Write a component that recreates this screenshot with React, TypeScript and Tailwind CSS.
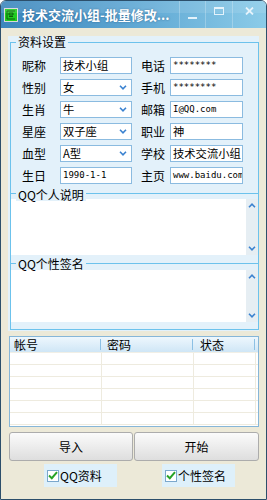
import React from "react";

const FONT = { fontFamily: '"Noto Sans CJK SC", "Liberation Sans", sans-serif' };
const MONO = { fontFamily: '"DejaVu Sans Mono", "Liberation Mono", monospace' };

function Chevron({ up = false }: { up?: boolean }) {
  return (
    <svg width="8" height="5" viewBox="0 0 8 5" className="block">
      <path
        d={up ? "M1 4.2 L4 1.2 L7 4.2" : "M1 0.8 L4 3.8 L7 0.8"}
        fill="none"
        stroke="#3b82d0"
        strokeWidth="1.6"
      />
    </svg>
  );
}

function Field({
  value,
  width,
  select = false,
  mono = false,
}: {
  value: string;
  width: string;
  select?: boolean;
  mono?: boolean;
}) {
  return (
    <div
      className={`${width} h-[17px] bg-white border border-[#8bbbe0] flex items-center pl-[2px] pr-[4px] overflow-hidden`}
    >
      <span
        className={mono ? "text-[9px] leading-none text-black flex-1 whitespace-nowrap" : "text-[11.3px] leading-none text-black flex-1 whitespace-nowrap"}
        style={mono ? MONO : undefined}
      >
        {value}
      </span>
      {select && <Chevron />}
    </div>
  );
}

type Row = {
  l: string;
  lv: string;
  sel?: boolean;
  lmono?: boolean;
  r: string;
  rv: string;
  rmono?: boolean;
};

const rows: Row[] = [
  { l: "昵称", lv: "技术小组", r: "电话", rv: "********", rmono: true },
  { l: "性别", lv: "女", sel: true, r: "手机", rv: "********", rmono: true },
  { l: "生肖", lv: "牛", sel: true, r: "邮箱", rv: "I@QQ.com", rmono: true },
  { l: "星座", lv: "双子座", sel: true, r: "职业", rv: "神" },
  { l: "血型", lv: "A型", sel: true, r: "学校", rv: "技术交流小组" },
  { l: "生日", lv: "1990-1-1", lmono: true, r: "主页", rv: "www.baidu.com", rmono: true },
];

function GroupLabel({ text, top }: { text: string; top: string }) {
  return (
    <div className={`absolute left-[5px] ${top} px-[2px] bg-[#e3f1fa] text-[12px] leading-[12px] text-black`}>
      {text}
    </div>
  );
}

function MemoBox({ h }: { h: string }) {
  return (
    <div className={`flex ${h} bg-white`}>
      <div className="flex-1" />
      <div className="w-[12px] bg-[#e6eef3] flex flex-col items-center justify-between py-[4px]">
        <Chevron up />
        <Chevron />
      </div>
    </div>
  );
}

function CheckItem({ label }: { label: string }) {
  return (
    <div className="w-[73px] h-[23px] bg-[#def0fa] flex items-center pl-[3px] gap-[1px]">
      <div className="w-[12px] h-[12px] bg-white border border-[#7ba8cc] flex items-center justify-center">
        <svg width="10" height="9" viewBox="0 0 10 9">
          <path d="M1 4.5 L3.8 7.2 L9 1.2" fill="none" stroke="#27a327" strokeWidth="2" />
        </svg>
      </div>
      <span className="text-[12px] leading-none text-black">{label}</span>
    </div>
  );
}

export default function App() {
  return (
    <div className="w-[267px] h-[500px] overflow-hidden bg-white" style={FONT}>
      <div className="w-[267px] h-[500px] flex flex-col rounded-t-[6px] overflow-hidden border border-[#2c4f6b]">
        {/* Title bar */}
        <div className="h-[27px] flex items-center bg-gradient-to-r from-[#3b86bc] via-[#5ea7d3] to-[#8bcbe8] relative">
          <div className="absolute inset-x-0 top-0 h-[12px] bg-white/10" />
          <div className="ml-[3px] w-[14px] h-[14px] border border-[#d8d8d8] bg-[#1fcc1f] flex items-center justify-center">
            <svg width="10" height="10" viewBox="0 0 10 10">
              <path d="M1 1 H9 M1 1 V9 H9 M3 3 H7 V5 H3 Z M3 6.5 H7" fill="none" stroke="#0c5c0c" strokeWidth="1" />
            </svg>
          </div>
          <span className="ml-[4px] text-[13px] font-bold text-white leading-none whitespace-nowrap [text-shadow:0_0_2px_rgba(0,40,80,0.5)]">
            技术交流小组-批量修改...
          </span>
          <div className="ml-auto flex h-full">
            <div className="w-[26px] border-l border-white/25 flex items-end justify-center pb-[9px]">
              <div className="w-[9px] h-[2px] bg-[#e3f2fb]" />
            </div>
            <div className="w-[27px] border-l border-white/25 flex items-start justify-center pt-[6px]">
              <div className="w-[10px] h-[8px] border border-[#e3f2fb] border-t-2" />
            </div>
            <div className="w-[34px] border-l border-white/25 flex items-start justify-center pt-[6px]">
              <svg width="9" height="8" viewBox="0 0 9 8">
                <path d="M1 0.5 L8 7.5 M8 0.5 L1 7.5" stroke="#e3f2fb" strokeWidth="1.8" />
              </svg>
            </div>
          </div>
        </div>

        {/* Body */}
        <div className="flex-1 bg-[#ece9d8] pl-[7px] pr-[7px] pt-[8px] flex flex-col">
          {/* Blue panel */}
          <div className="w-[251px] h-[295px] bg-[#e3f1fa] pl-[2px] pt-[6px]">
            {/* 资料设置 */}
            <div className="relative h-[151px] border-x border-t border-[#6cc2ec] pl-[11px] pt-[14px]">
              <GroupLabel text="资料设置" top="top-[-7px]" />
              <div className="flex flex-col gap-[5px]">
                {rows.map((r) => (
                  <div key={r.l} className="flex items-center h-[17px]">
                    <span className="w-[38px] text-[12px] leading-none text-black">{r.l}</span>
                    <Field value={r.lv} width="w-[72px]" select={r.sel} mono={r.lmono} />
                    <span className="ml-[9px] w-[29px] text-[12px] leading-none text-black">{r.r}</span>
                    <Field value={r.rv} width="w-[73px]" mono={r.rmono} />
                  </div>
                ))}
              </div>
            </div>
            {/* QQ个人说明 */}
            <div className="relative h-[70px] border-x border-t border-[#6cc2ec] pt-[5px]">
              <GroupLabel text="QQ个人说明" top="top-[-5px]" />
              <MemoBox h="h-[56px]" />
            </div>
            {/* QQ个性签名 */}
            <div className="relative h-[67px] border border-[#6cc2ec] pt-[6px]">
              <GroupLabel text="QQ个性签名" top="top-[-6px]" />
              <MemoBox h="h-[52px]" />
            </div>
          </div>

          {/* List view */}
          <div className="ml-[1px] mt-[5px] w-[250px] h-[91px] border border-[#86b6d8] bg-white flex flex-col overflow-hidden">
            <div className="h-[15px] flex bg-gradient-to-b from-[#eef7fd] to-[#cfe6f6] text-[12px] leading-none text-black">
              <div className="w-[92px] flex items-center pl-[4px] relative">
                帐号
                <div className="absolute right-[1px] top-[2px] bottom-[2px] w-[1px] bg-[#8cc0e4]" />
              </div>
              <div className="w-[92px] flex items-center pl-[5px] relative">
                密码
                <div className="absolute right-[1px] top-[2px] bottom-[2px] w-[1px] bg-[#8cc0e4]" />
              </div>
              <div className="w-[62px] flex items-center pl-[6px] relative">
                状态
                <div className="absolute right-[1px] top-[2px] bottom-[2px] w-[1px] bg-[#8cc0e4]" />
              </div>
            </div>
            <div className="flex-1 flex flex-col border-t border-[#f1efe6]">
              {[0, 1, 2, 3, 4, 5].map((i) => (
                <div key={i} className="h-[12px] shrink-0 flex border-b border-[#eeebdf]">
                  <div className="w-[92px] border-r border-[#eeebdf]" />
                  <div className="w-[92px] border-r border-[#eeebdf]" />
                  <div className="w-[62px] border-r border-[#eeebdf]" />
                </div>
              ))}
            </div>
          </div>

          {/* Buttons */}
          <div className="ml-[1px] mt-[5px] flex gap-[1px]">
            <button className="w-[124px] h-[29px] rounded-[3px] border border-[#acacac] bg-gradient-to-b from-[#fbfbfb] to-[#dedede] text-[12px] text-black">
              导入
            </button>
            <button className="w-[125px] h-[29px] rounded-[3px] border border-[#acacac] bg-gradient-to-b from-[#fbfbfb] to-[#dedede] text-[12px] text-black">
              开始
            </button>
          </div>

          {/* Checkboxes */}
          <div className="mt-[3px] ml-[36px] flex gap-[45px]">
            <CheckItem label="QQ资料" />
            <CheckItem label="个性签名" />
          </div>
        </div>
      </div>
    </div>
  );
}
